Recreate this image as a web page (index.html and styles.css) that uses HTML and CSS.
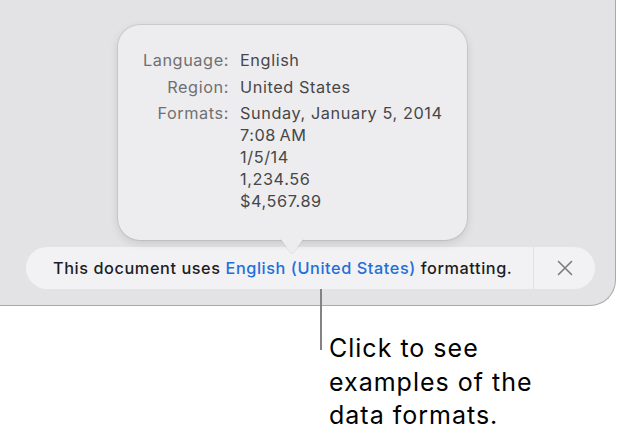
FILE: index.html
```html
<!DOCTYPE html>
<html>
<head>
<meta charset="utf-8">
<link rel="stylesheet" href="styles.css">
</head>
<body>
<div class="window">
  <div class="popover">
    <div class="info">
      <div class="label">Language:</div>
      <div class="value">English</div>
      <div class="label">Region:</div>
      <div class="value">United States</div>
      <div class="label">Formats:</div>
      <div class="value lines">
        <span>Sunday, January 5, 2014</span>
        <span>7:08&#8201;AM</span>
        <span>1/5/14</span>
        <span>1,234.56</span>
        <span>$4,567.89</span>
      </div>
    </div>
  </div>
  <div class="bar">
    <div class="message">This document uses <span class="link">English (United States)</span> formatting.</div>
    <div class="close">
      <svg width="16" height="16" viewBox="0 0 16 16"><path d="M1.5 1.5 L14.5 14.5 M14.5 1.5 L1.5 14.5" stroke="#7b7b7d" stroke-width="1.6" stroke-linecap="round" fill="none"/></svg>
    </div>
  </div>
</div>
<div class="callout">
  <div class="leader"></div>
  <p class="caption">Click to see<br>examples of the<br>data formats.</p>
</div>
</body>
</html>
```
FILE: styles.css
```css
html, body {
  margin: 0;
  padding: 0;
  background: #ffffff;
  font-family: Inter, "Noto Sans", sans-serif;
}
.window {
  width: 615px;
  height: 280px;
  background: #e3e3e6;
  border-right: 1px solid #a9a9ab;
  border-bottom: 1px solid #a9a9ab;
  border-bottom-right-radius: 26px;
  padding-top: 25px;
  display: flex;
  flex-direction: column;
  position: relative;
}
.popover {
  position: relative;
  margin-left: 118px;
  width: 349px;
  height: 215px;
  box-sizing: border-box;
  background: #ededef;
  border-radius: 22px;
  box-shadow: 0 0 0 1px rgba(0,0,0,0.08), 0 3px 10px rgba(0,0,0,0.12);
  padding: 24px 0 0 0;
  z-index: 2;
}
.popover::after {
  content: "";
  position: absolute;
  left: 164px;
  bottom: -8px;
  width: 20px;
  height: 20px;
  background: #ededef;
  transform: rotate(45deg) skew(8deg, 8deg);
  border-bottom-right-radius: 4px;
  box-shadow: 1px 1px 1px rgba(0,0,0,0.06);
}
.info {
  display: grid;
  grid-template-columns: 111px auto;
  column-gap: 11px;
  row-gap: 4.5px;
  font-size: 16.3px;
  letter-spacing: 0.58px;
  line-height: 22px;
}
.label {
  text-align: right;
  color: #707072;
}
.value {
  color: #474749;
}
.lines {
  display: flex;
  flex-direction: column;
}
.bar {
  margin-top: 7px;
  margin-left: 26px;
  width: 569px;
  height: 42px;
  background: #f2f2f4;
  border-radius: 21px;
  display: flex;
  align-items: stretch;
  position: relative;
  z-index: 1;
}
.message {
  flex: 1;
  display: flex;
  align-items: center;
  padding-left: 27px;
  font-size: 16.3px;
  letter-spacing: 0.57px;
  font-weight: 500;
  color: #1d1d1f;
  border-right: 1px solid #e1e1e4;
  white-space: pre;
}
.link {
  color: #1f6fdc;
}
.close {
  width: 61px;
  display: flex;
  align-items: center;
  justify-content: center;
}
.callout {
  position: relative;
  padding-left: 329px;
}
.leader {
  position: absolute;
  left: 320px;
  top: -22px;
  width: 2px;
  height: 66px;
  background: #838385;
}
.caption {
  margin: 0;
  padding-top: 26px;
  font-size: 25px;
  letter-spacing: 1px;
  line-height: 33.5px;
  color: #000;
}
```
